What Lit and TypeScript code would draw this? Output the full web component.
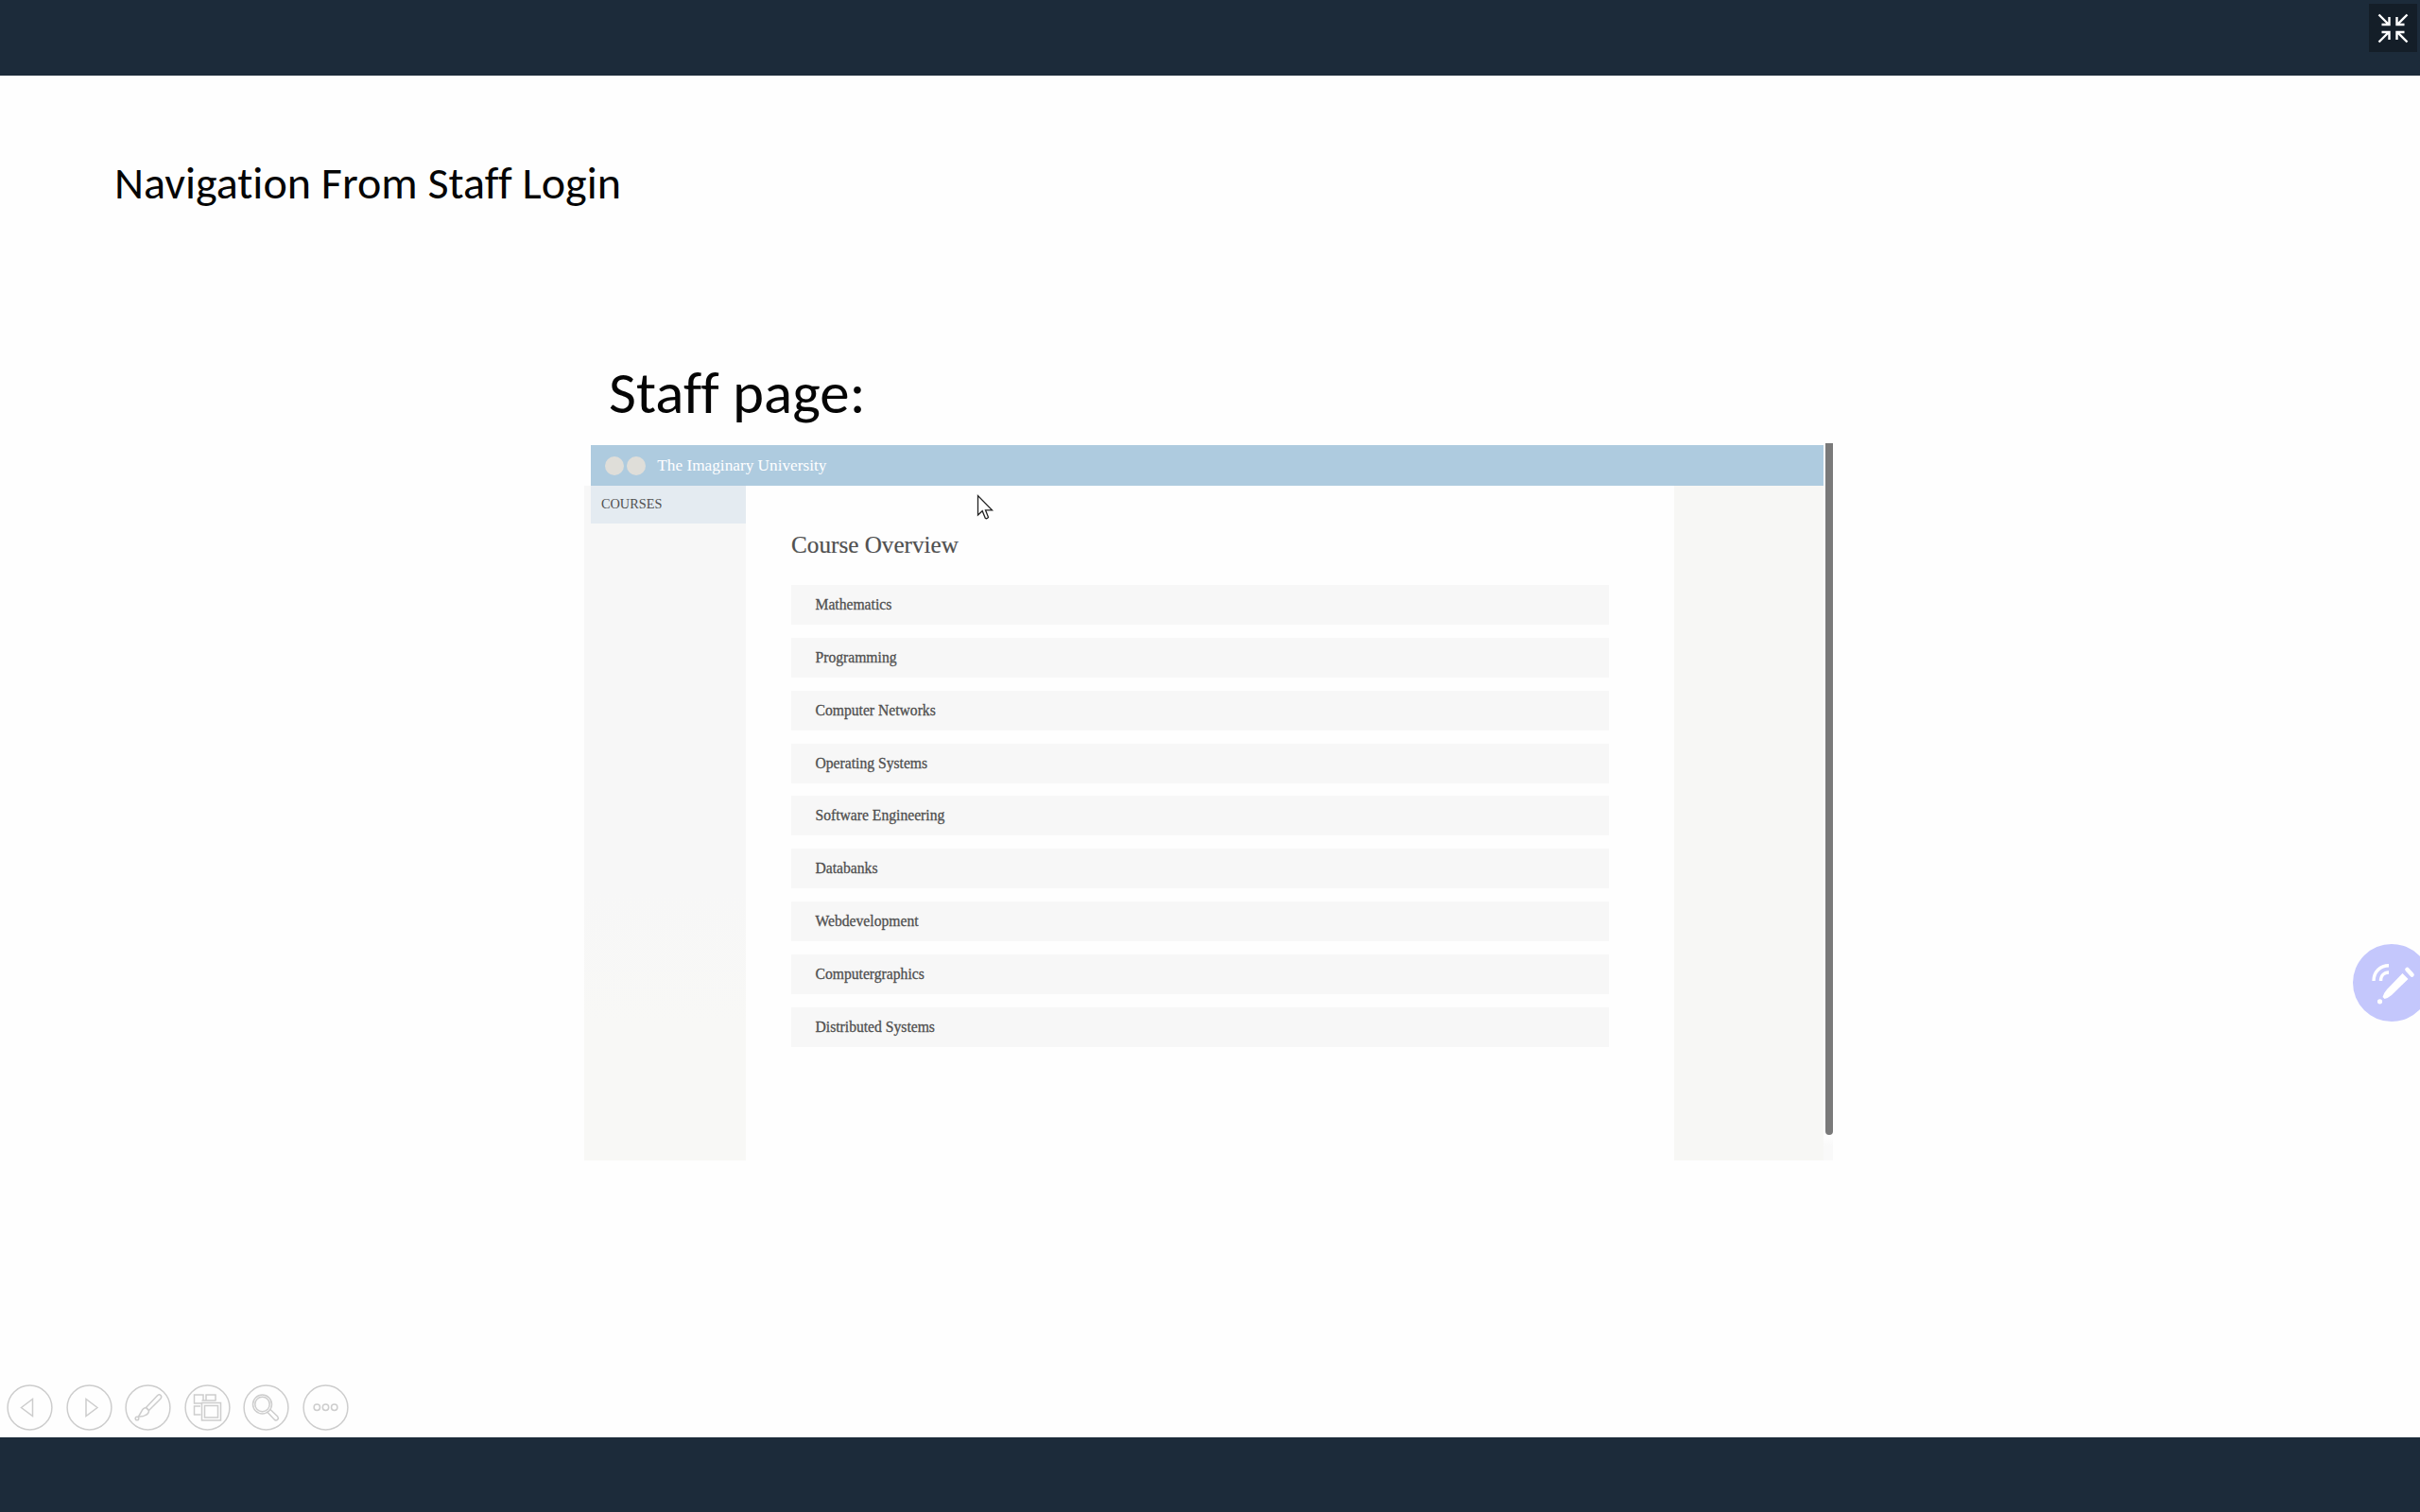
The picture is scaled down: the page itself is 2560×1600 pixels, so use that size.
import { LitElement, html, css, svg } from "lit";
import { customElement, property } from "lit/decorators.js";

const COURSES = [
  "Mathematics",
  "Programming",
  "Computer Networks",
  "Operating Systems",
  "Software Engineering",
  "Databanks",
  "Webdevelopment",
  "Computergraphics",
  "Distributed Systems",
];

const CONTROLS = [
  { name: "Previous", art: svg`<path d="M15.5 24.5 27.5 15.5V33.5Z"/>` },
  { name: "Next", art: svg`<path d="M33 24.5 21 15.5V33.5Z"/>` },
  {
    name: "Pen",
    art: svg`<path d="M22.5 24.5 34.5 11.8Q36.5 10 38 11.5Q39.5 13.2 37.8 15.2L25.5 27.5Z"/>
      <path d="M22.5 24.5Q19 25 17.5 29L14.5 34Q19 34.5 22 32.5Q25.5 31 25.5 27.5Z"/>
      <circle cx="13" cy="36" r="1.8"/>`,
  },
  {
    name: "All slides",
    art: svg`<path d="M18 20H10.500V11H20V17M23 17V11H33V17M17 23H10.500V32H17.500"/>
      <path d="M18.500 19.500H38.500V38H18.500Z"/><path d="M21.500 22.500H35.500V35H21.500Z"/><path d="M18.500 17H33.500"/>`,
  },
  {
    name: "Zoom",
    art: svg`<circle cx="20.500" cy="21" r="10"/><circle cx="20.500" cy="21" r="7.700"/>
      <path d="M26 29.500 33.500 37.500Q35.500 38.500 36.700 37.200Q38 35.800 36.700 34L29 26.500"/>`,
  },
  {
    name: "More",
    art: svg`<circle cx="15.300" cy="24.200" r="3.200"/><circle cx="24.500" cy="24.200" r="3.200"/><circle cx="33.700" cy="24.200" r="3.200"/>`,
  },
];

@customElement("slide-heading")
class SlideHeading extends LitElement {
  @property() text = "";
  @property({ type: Number }) size = 47;
  @property({ type: Number }) span = 100;

  static styles = css`
    :host { display: block; }
    svg { display: block; overflow: visible; }
    text { font-family: Carlito, Lato, sans-serif; font-variant-ligatures: none; fill: #050505; }
  `;

  render() {
    return html`<svg width=${this.span} height=${this.size} role="heading">
      <text x="0" y=${this.size * 0.8} font-size=${this.size} textLength=${this.span} lengthAdjust="spacingAndGlyphs">${this.text}</text>
    </svg>`;
  }
}

@customElement("slide-controls")
class SlideControls extends LitElement {
  static styles = css`
    :host { display: flex; gap: 13.6px; }
    svg { display: block; width: 49px; height: 49px; fill: none; stroke: #cdcdcd; stroke-width: 1.5; }
  `;

  render() {
    return CONTROLS.map(
      (c) => html`<svg viewBox="0 0 49 49" aria-label=${c.name}><circle cx="24.5" cy="24.5" r="23.4"></circle>${c.art}</svg>`,
    );
  }
}

@customElement("staff-page")
class StaffPage extends LitElement {
  static styles = css`
    :host {
      display: grid;
      grid-template-columns: 1311px 10px;
      height: 759px;
      font-family: "Liberation Serif", serif;
      color: #505050;
    }
    .site { display: flex; flex-direction: column; padding-top: 2px; }
    .bar {
      display: flex;
      align-items: center;
      height: 43px;
      margin-left: 6.5px;
      background: #aecbdf;
      padding-left: 15.5px;
      gap: 3.4px;
      box-sizing: border-box;
    }
    .dot { width: 20px; height: 20px; border-radius: 50%; background: #dfded9; }
    .brand { margin-left: 8.5px; font-size: 17.25px; line-height: 20px; color: #fff; white-space: nowrap; }
    .body { flex: 1; display: grid; grid-template-columns: 170.5px 982.5px 158px; }
    .side { background: linear-gradient(#f7f7f7 60%, #f8f8f6 80%); }
    .side.right { background: #f7f7f5; }
    .item {
      margin-left: 6.5px;
      height: 40px;
      padding-left: 11.5px;
      background: #e4ebf1;
      font-size: 14.3px;
      line-height: 39px;
    }
    .main { padding: 47px 69px 0 48.5px; }
    .title { height: 58px; font-size: 25.2px; line-height: 32px; -webkit-text-stroke: 0.2px #505050; }
    .list { display: flex; flex-direction: column; gap: 13.87px; }
    .row {
      height: 42px;
      padding-left: 25.5px;
      background: #f7f7f7;
      font-size: 15.65px;
      line-height: 42px;
      -webkit-text-stroke: 0.3px #505050;
    }
    .track { background: linear-gradient(#fff 96%, #f9f9f9 98%); padding-left: 2px; }
    .thumb { width: 8px; height: 732px; background: #7a7a7a; border-radius: 0 0 4px 4px; }
  `;

  render() {
    return html`
      <div class="site">
        <div class="bar">
          <span class="dot"></span><span class="dot"></span>
          <span class="brand">The Imaginary University</span>
        </div>
        <div class="body">
          <div class="side"><div class="item">COURSES</div></div>
          <div class="main">
            <div class="title">Course Overview</div>
            <div class="list">${COURSES.map((c) => html`<div class="row">${c}</div>`)}</div>
          </div>
          <div class="side right"></div>
        </div>
      </div>
      <div class="track"><div class="thumb"></div></div>
    `;
  }
}

@customElement("app-root")
class AppRoot extends LitElement {
  static styles = css`
    :host {
      display: grid;
      grid-template-rows: 80px 1441px 79px;
      width: 2560px;
      height: 1600px;
      position: relative;
      overflow: hidden;
      background: #1c2b3a;
    }
    .top { display: flex; justify-content: flex-end; padding: 4px 3px 0 0; }
    .collapse { width: 51px; height: 51px; background: #141e28; }
    .collapse svg { display: block; fill: none; stroke: #fff; stroke-width: 2.4; }
    .slide { display: flex; flex-direction: column; background: #fefefe; }
    .heading { padding: 91.5px 0 0 121px; height: 216px; box-sizing: border-box; }
    .shot { padding-left: 618px; display: flex; flex-direction: column; flex: 1; }
    .caption { padding: 90.5px 0 0 25.5px; height: 173px; box-sizing: border-box; }
    .controls { padding: 0 0 7px 7px; }
    .pen { position: absolute; left: 2489px; top: 999px; }
    .cursor { position: absolute; left: 1032px; top: 522px; }
  `;

  render() {
    return html`
      <div class="top">
        <div class="collapse">
          <svg width="51" height="51" viewBox="0 0 51 51">
            <path d="M10.500 11.500 21.500 22.500M13.500 22H21.500V14M40.500 11.500 29.500 22.500M37.500 22H29.500V14M10.500 40.500 21.500 29.500M13.500 30H21.500V38M40.500 40.500 29.500 29.500M37.500 30H29.500V38" />
          </svg>
        </div>
      </div>
      <div class="slide">
        <div class="heading"><slide-heading text="Navigation From Staff Login" size="47" span="536"></slide-heading></div>
        <div class="shot">
          <div class="caption"><slide-heading text="Staff page:" size="62" span="271.5"></slide-heading></div>
          <staff-page></staff-page>
        </div>
        <div class="controls"><slide-controls></slide-controls></div>
      </div>
      <div></div>
      <svg class="cursor" width="22" height="30" viewBox="0 0 22 30">
        <path d="M2.500 2.500V23L7.200 18.700 10.300 26.300Q11.800 27.500 13.500 25.300L10.500 17.800H17.500Z" fill="#fff" stroke="#222" stroke-width="1.300" />
      </svg>
      <svg class="pen" width="82" height="82" viewBox="0 0 82 82">
        <circle cx="41" cy="41" r="41" fill="#c4c7fc" />
        <g fill="none" stroke="#fff" stroke-width="3.400">
          <path d="M22 39C22 29.500 29 22.700 38 22.700" />
          <path d="M29.500 39C29.500 33.500 33 30 38 30" />
          <path d="M57.500 27 62.500 32.500" stroke-width="4.600" stroke-linecap="round" />
        </g>
        <path d="M52.500 31 58.500 37 41 54Q37.500 57 33.500 58L31.500 56Q32.500 52 36 48Z" fill="#fff" />
        <circle cx="28.500" cy="60.800" r="2.600" fill="#fff" />
      </svg>
    `;
  }
}
